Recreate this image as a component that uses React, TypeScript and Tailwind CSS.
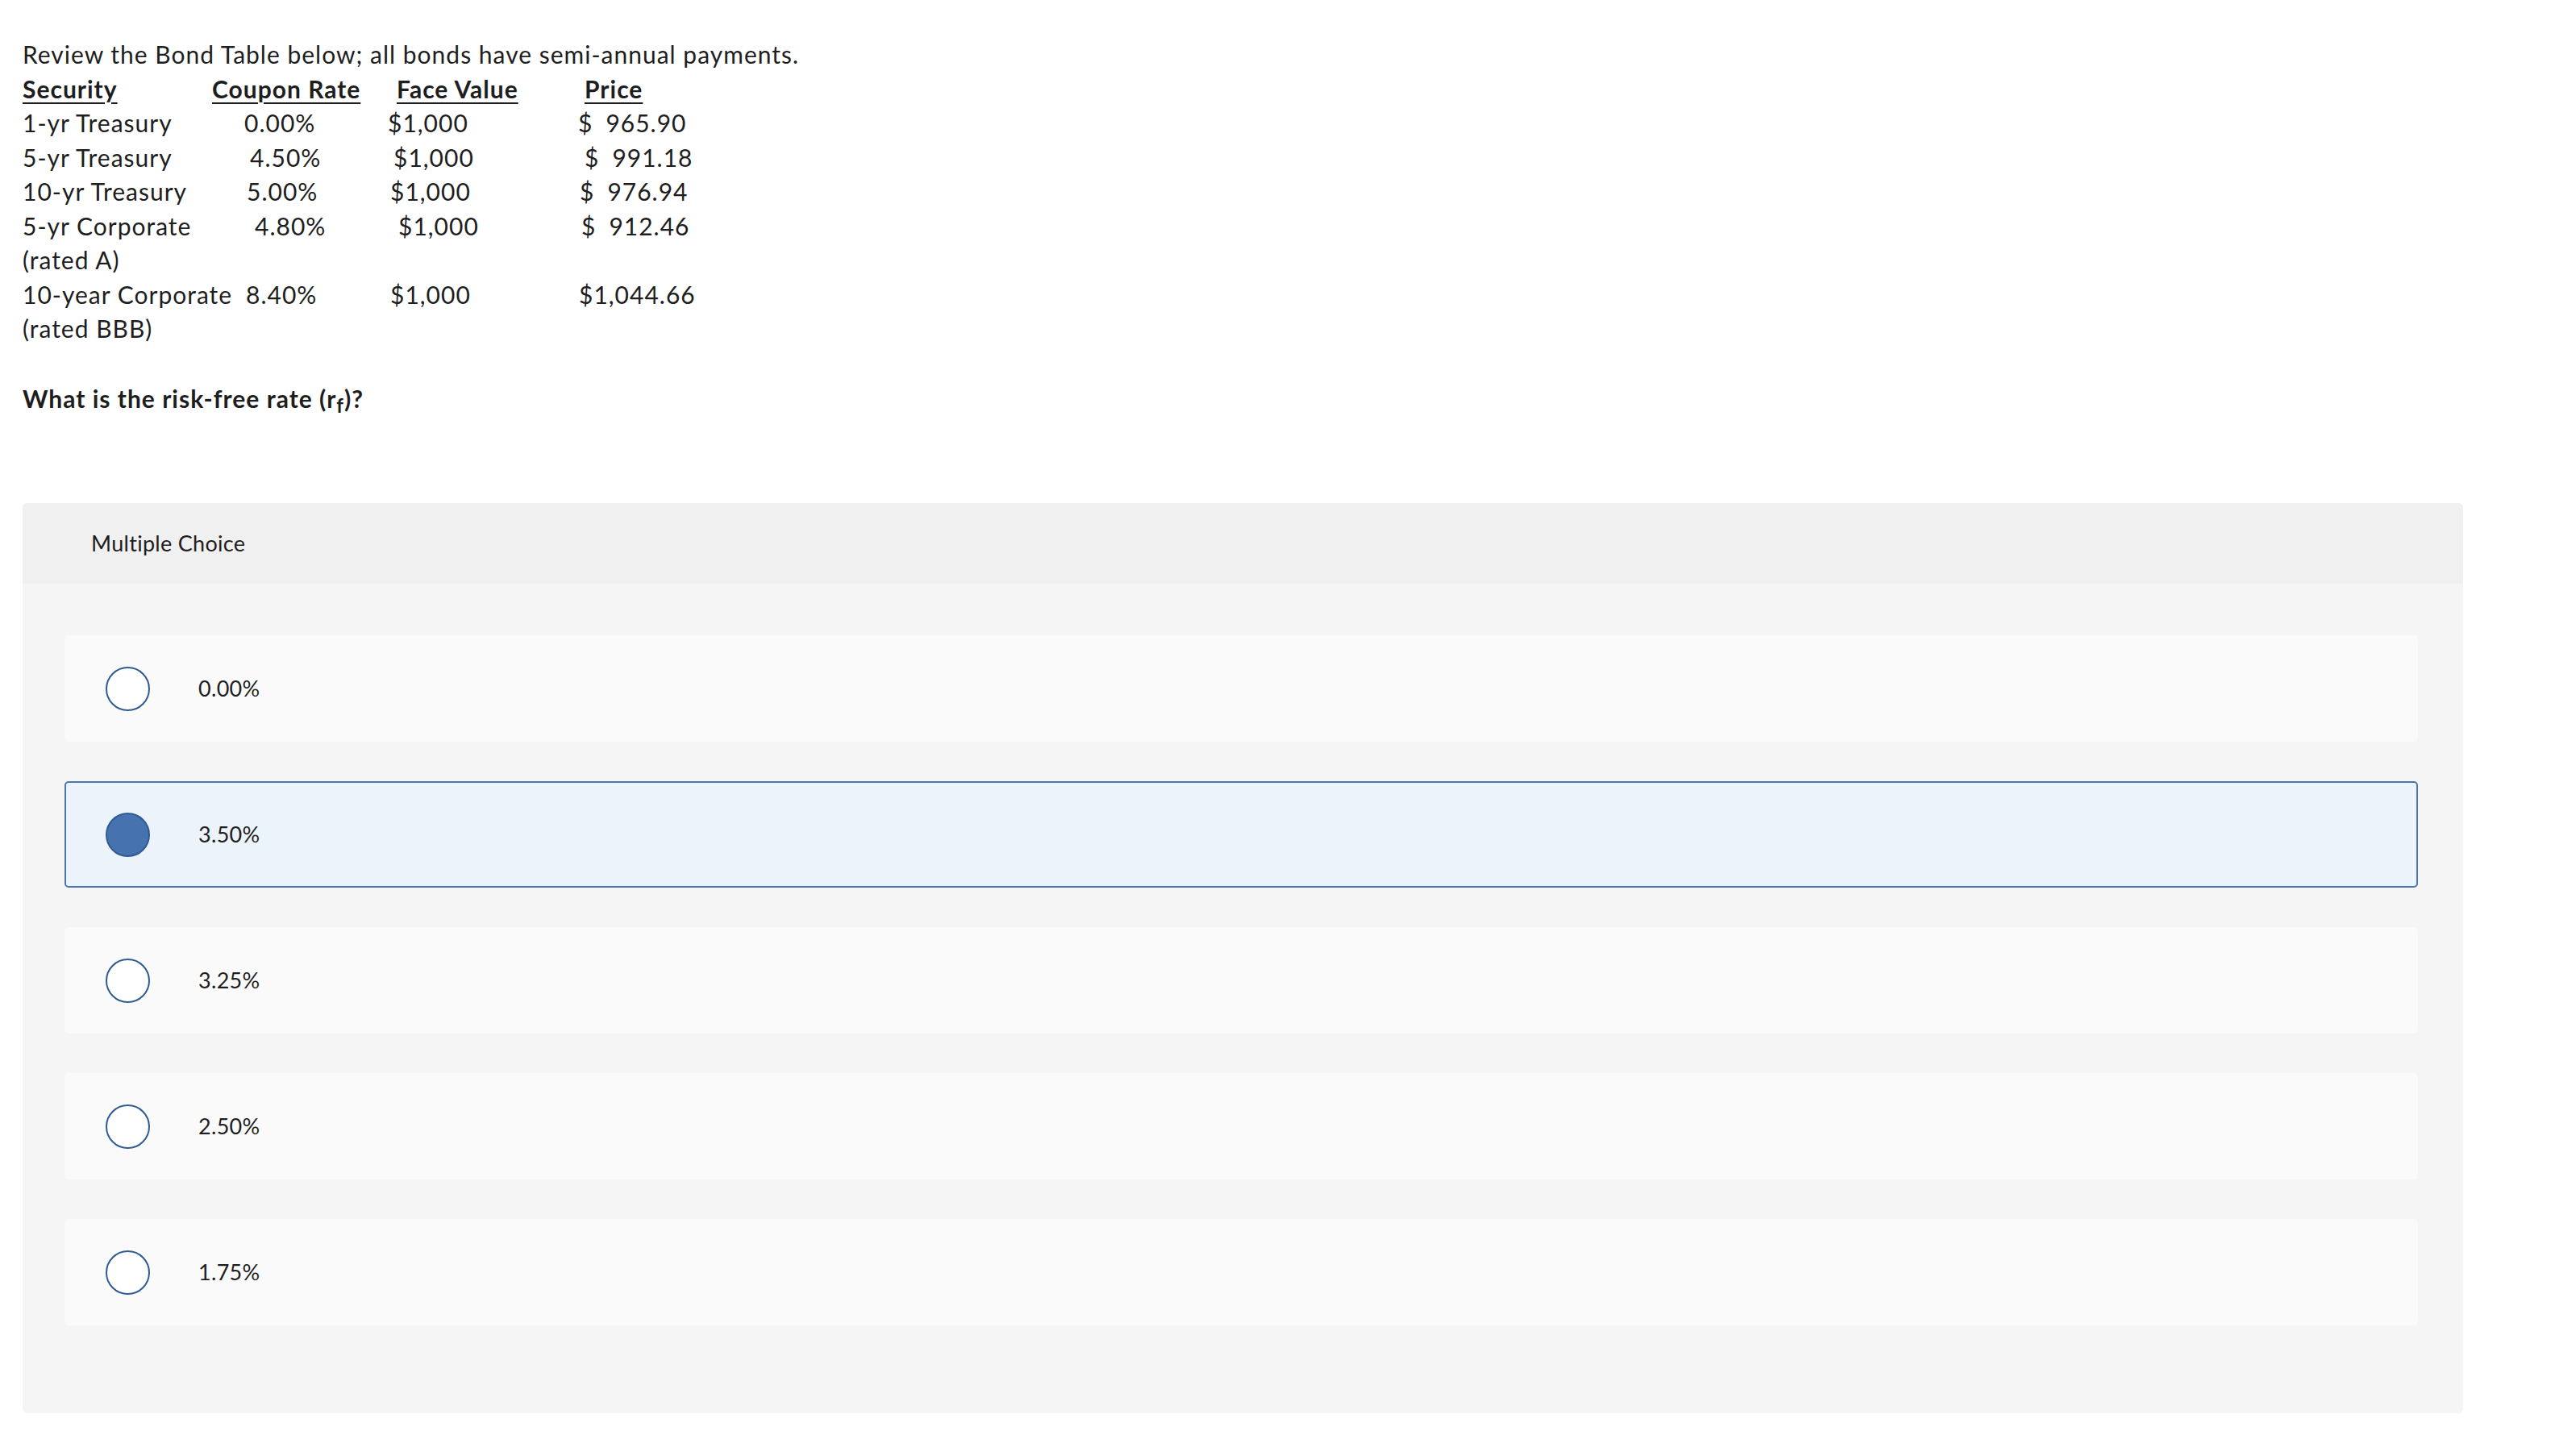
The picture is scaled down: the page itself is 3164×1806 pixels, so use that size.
import { useState } from "react";

interface BondRow {
  security: string[];
  coupon: string;
  face: string;
  price: string;
  pads: [string, string, string];
}

const bonds: BondRow[] = [
  { security: ["1-yr Treasury"], coupon: "0.00%", face: "$1,000", price: "$ 965.90", pads: ["pl-[40px]", "pl-[11px]", "pl-[12px]"] },
  { security: ["5-yr Treasury"], coupon: "4.50%", face: "$1,000", price: "$ 991.18", pads: ["pl-[47px]", "pl-[18px]", "pl-[20px]"] },
  { security: ["10-yr Treasury"], coupon: "5.00%", face: "$1,000", price: "$ 976.94", pads: ["pl-[43px]", "pl-[14px]", "pl-[14px]"] },
  { security: ["5-yr Corporate", "(rated A)"], coupon: "4.80%", face: "$1,000", price: "$ 912.46", pads: ["pl-[53px]", "pl-[24px]", "pl-[16px]"] },
  { security: ["10-year Corporate", "(rated BBB)"], coupon: "8.40%", face: "$1,000", price: "$1,044.66", pads: ["pl-[42px]", "pl-[14px]", "pl-[13px]"] },
];

const choices = ["0.00%", "3.50%", "3.25%", "2.50%", "1.75%"];

export default function App() {
  const [selected, setSelected] = useState(1);

  return (
    <div className="min-h-screen bg-white text-[#1e1e1e] font-['Lato','Liberation_Sans',sans-serif] pl-[28px] pr-[109px] pt-[46px]">
      {/* Bond table */}
      <div className="text-[30px] leading-[42.5px] tracking-[1px]">
        <p>Review the Bond Table below; all bonds have semi-annual payments.</p>
        <div className="grid grid-cols-[235px_207px_235px_1fr]">
          <div className="font-bold underline decoration-2 underline-offset-[5px]">Security</div>
          <div className="font-bold underline decoration-2 underline-offset-[5px]">Coupon Rate</div>
          <div className="font-bold underline decoration-2 underline-offset-[5px] pl-[22px]">Face Value</div>
          <div className="font-bold underline decoration-2 underline-offset-[5px] pl-[20px]">Price</div>
          {bonds.map((b) => (
            <div key={b.security[0]} className="contents">
              <div className="whitespace-nowrap">
                {b.security.map((s) => (
                  <div key={s}>{s}</div>
                ))}
              </div>
              <div className={b.pads[0]}>{b.coupon}</div>
              <div className={b.pads[1]}>{b.face}</div>
              <div className={b.pads[2]}>{b.price.replace("$ ", "$\u2002")}</div>
            </div>
          ))}
        </div>
        <p className="mt-[44px] font-bold">
          What is the risk-free rate (r<sub className="text-[24px]">f</sub>)?
        </p>
      </div>

      {/* Multiple choice panel */}
      <div className="mt-[109px] rounded-[6px] bg-[#f5f5f5] overflow-hidden">
        <div className="h-[100px] bg-[#f0f0f0] flex items-center pl-[85px] text-[27px] tracking-[0.3px]">
          Multiple Choice
        </div>
        <div className="flex flex-col gap-[49px] pl-[52px] pr-[56px] pt-[64px] pb-[109px]">
          {choices.map((c, i) => {
            const active = i === selected;
            return (
              <button
                key={c}
                type="button"
                onClick={() => setSelected(i)}
                className={
                  active
                    ? "h-[132px] flex items-center rounded-[5px] border-2 border-[#4a77b4] bg-[#ecf3fb] pl-[49px] text-left"
                    : "h-[132px] flex items-center rounded-[5px] border-2 border-transparent bg-[#fafafa] pl-[49px] text-left"
                }
              >
                <span
                  className={
                    active
                      ? "w-[55px] h-[55px] rounded-full border-2 border-[#2f5b92] bg-[#4672b0] shrink-0"
                      : "w-[55px] h-[55px] rounded-full border-2 border-[#2f5b92] bg-white shrink-0"
                  }
                />
                <span className="ml-[60px] text-[27px] tracking-[0.3px]">{c}</span>
              </button>
            );
          })}
        </div>
      </div>
    </div>
  );
}
